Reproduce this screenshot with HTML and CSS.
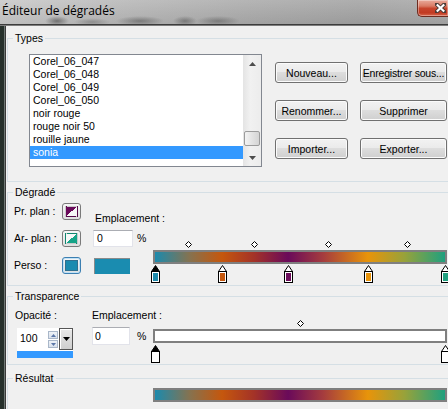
FILE: index.html
```html
<!DOCTYPE html>
<html lang="fr">
<head>
<meta charset="utf-8">
<title>Éditeur de dégradés</title>
<link rel="stylesheet" href="styles.css">
</head>
<body>
<div class="window">
  <header class="titlebar">
    <span class="title">Éditeur de dégradés</span>
    <div class="close" aria-label="Fermer">
      <svg width="11" height="10" viewBox="0 0 11 10"><path d="M1.5 1.2 L9.5 8.8 M9.5 1.2 L1.5 8.8" stroke="#4a3a36" stroke-width="4" stroke-linecap="square"/><path d="M1.8 1.5 L9.2 8.5 M9.2 1.5 L1.8 8.5" stroke="#fff" stroke-width="2.2"/></svg>
    </div>
  </header>
  <div class="frame-line"></div>
  <div class="frame">
    <div class="frame-edge"></div>
    <main class="client">

      <fieldset class="group types">
        <legend>Types</legend>
        <div class="types-body">
          <div class="listbox">
            <ul class="items">
              <li>Corel_06_047</li>
              <li>Corel_06_048</li>
              <li>Corel_06_049</li>
              <li>Corel_06_050</li>
              <li>noir rouge</li>
              <li>rouge noir 50</li>
              <li>rouille jaune</li>
              <li class="selected">sonia</li>
            </ul>
            <div class="scrollbar">
              <div class="sb-btn"><svg width="7" height="4" viewBox="0 0 7 4"><path d="M3.5 0 L7 4 L0 4 Z" fill="#4d4d4d"/></svg></div>
              <div class="sb-track"><div class="sb-thumb"></div></div>
              <div class="sb-btn"><svg width="7" height="4" viewBox="0 0 7 4"><path d="M0 0 L7 0 L3.5 4 Z" fill="#4d4d4d"/></svg></div>
            </div>
          </div>
          <div class="buttons">
            <button class="btn">Nouveau...</button>
            <button class="btn wide">Enregistrer sous...</button>
            <button class="btn">Renommer...</button>
            <button class="btn">Supprimer</button>
            <button class="btn">Importer...</button>
            <button class="btn">Exporter...</button>
          </div>
        </div>
      </fieldset>

      <fieldset class="group degrade">
        <legend>Dégradé</legend>
        <div class="grad-body">
          <div class="swatch-grid">
            <span class="lbl">Pr. plan :</span>
            <div class="swatch-btn"><span class="chip chip-fg"></span></div>
            <span class="lbl">Ar- plan :</span>
            <div class="swatch-btn"><span class="chip chip-bg"></span></div>
            <span class="lbl">Perso :</span>
            <div class="swatch-btn active"><span class="chip chip-custom"></span></div>
          </div>
          <div class="place-col">
            <span class="lbl place-lbl">Emplacement :</span>
            <div class="field-row"><span class="field">0</span><span class="pct">%</span></div>
            <div class="custom-color"></div>
          </div>
          <div class="bar-col">
            <div class="ticks">
              <svg class="diamond" style="left:11.5%" width="7" height="7" viewBox="0 0 7 7"><path d="M3.5 0.5 L6.5 3.5 L3.5 6.5 L0.5 3.5 Z" fill="#fff" stroke="#000"/></svg>
              <svg class="diamond" style="left:34.3%" width="7" height="7" viewBox="0 0 7 7"><path d="M3.5 0.5 L6.5 3.5 L3.5 6.5 L0.5 3.5 Z" fill="#fff" stroke="#000"/></svg>
              <svg class="diamond" style="left:59.5%" width="7" height="7" viewBox="0 0 7 7"><path d="M3.5 0.5 L6.5 3.5 L3.5 6.5 L0.5 3.5 Z" fill="#fff" stroke="#000"/></svg>
              <svg class="diamond" style="left:86.8%" width="7" height="7" viewBox="0 0 7 7"><path d="M3.5 0.5 L6.5 3.5 L3.5 6.5 L0.5 3.5 Z" fill="#fff" stroke="#000"/></svg>
            </div>
            <div class="bar gradient"></div>
            <div class="stops">
              <svg class="marker" style="left:0%" width="9" height="18" viewBox="0 0 9 18"><path d="M4.5 0.5 L8.5 6.5 L0.5 6.5 Z" fill="#000" stroke="#000"/><rect x="0.5" y="6.5" width="8" height="11" fill="#fff" stroke="#000"/><rect x="2" y="8" width="5" height="8" fill="#1d89ab"/></svg>
              <svg class="marker" style="left:23.1%" width="9" height="18" viewBox="0 0 9 18"><path d="M4.5 0.5 L8.5 6.5 L0.5 6.5 Z" fill="#fff" stroke="#000"/><rect x="0.5" y="6.5" width="8" height="11" fill="#fff" stroke="#000"/><rect x="2" y="8" width="5" height="8" fill="#c6570d"/></svg>
              <svg class="marker" style="left:45.9%" width="9" height="18" viewBox="0 0 9 18"><path d="M4.5 0.5 L8.5 6.5 L0.5 6.5 Z" fill="#fff" stroke="#000"/><rect x="0.5" y="6.5" width="8" height="11" fill="#fff" stroke="#000"/><rect x="2" y="8" width="5" height="8" fill="#6c0d5c"/></svg>
              <svg class="marker" style="left:73.4%" width="9" height="18" viewBox="0 0 9 18"><path d="M4.5 0.5 L8.5 6.5 L0.5 6.5 Z" fill="#fff" stroke="#000"/><rect x="0.5" y="6.5" width="8" height="11" fill="#fff" stroke="#000"/><rect x="2" y="8" width="5" height="8" fill="#e8940b"/></svg>
              <svg class="marker" style="left:100%" width="9" height="18" viewBox="0 0 9 18"><path d="M4.5 0.5 L8.5 6.5 L0.5 6.5 Z" fill="#fff" stroke="#000"/><rect x="0.5" y="6.5" width="8" height="11" fill="#fff" stroke="#000"/><rect x="2" y="8" width="5" height="8" fill="#1fa07f"/></svg>
            </div>
          </div>
        </div>
      </fieldset>

      <fieldset class="group transp">
        <legend>Transparence</legend>
        <div class="trans-body">
          <div class="op-col">
            <span class="lbl">Opacité :</span>
            <div class="combo">
              <div class="combo-top">
                <div class="combo-edit">
                  <span class="combo-val">100</span>
                  <div class="spin">
                    <span class="spin-btn"><svg width="5" height="3" viewBox="0 0 5 3"><path d="M2.5 0 L5 3 L0 3 Z" fill="#5b77a8"/></svg></span>
                    <span class="spin-btn"><svg width="5" height="3" viewBox="0 0 5 3"><path d="M0 0 L5 0 L2.5 3 Z" fill="#5b77a8"/></svg></span>
                  </div>
                </div>
                <div class="combo-drop"><svg width="7" height="4" viewBox="0 0 7 4"><path d="M0 0 L7 0 L3.5 4 Z" fill="#000"/></svg></div>
              </div>
              <div class="combo-sel"></div>
            </div>
          </div>
          <div class="place-col t">
            <span class="lbl">Emplacement :</span>
            <div class="field-row"><span class="field t">0</span><span class="pct">%</span></div>
          </div>
          <div class="bar-col t">
            <div class="ticks">
              <svg class="diamond" style="left:50%" width="7" height="7" viewBox="0 0 7 7"><path d="M3.5 0.5 L6.5 3.5 L3.5 6.5 L0.5 3.5 Z" fill="#fff" stroke="#000"/></svg>
            </div>
            <div class="bar white"></div>
            <div class="stops t">
              <svg class="marker" style="left:0%" width="9" height="18" viewBox="0 0 9 18"><path d="M4.5 0.5 L8.5 6.5 L0.5 6.5 Z" fill="#000" stroke="#000"/><rect x="0.5" y="6.5" width="8" height="11" fill="#fff" stroke="#000"/></svg>
              <svg class="marker" style="left:100%" width="9" height="18" viewBox="0 0 9 18"><path d="M4.5 0.5 L8.5 6.5 L0.5 6.5 Z" fill="#fff" stroke="#000"/><rect x="0.5" y="6.5" width="8" height="11" fill="#fff" stroke="#000"/></svg>
            </div>
          </div>
        </div>
      </fieldset>

      <fieldset class="group result">
        <legend>Résultat</legend>
        <div class="result-body">
          <div class="bar gradient"></div>
        </div>
      </fieldset>

    </main>
  </div>
</div>
</body>
</html>
```

FILE: styles.css
```css
* { box-sizing: border-box; }
html, body { margin: 0; padding: 0; }
body {
  width: 448px;
  height: 409px;
  overflow: hidden;
  background: #f0f0f0;
  font-family: "Liberation Sans", Arial, sans-serif;
  font-size: 10.5px;
  color: #000;
}
.window {
  width: 448px;
  height: 409px;
  display: flex;
  flex-direction: column;
  overflow: hidden;
}

/* title bar */
.titlebar {
  height: 24px;
  flex: none;
  display: flex;
  align-items: flex-start;
  background:
    radial-gradient(ellipse 12px 5px at 57px 21px, rgba(55,55,55,.55), transparent),
    radial-gradient(ellipse 18px 4px at 92px 22px, rgba(70,70,70,.35), transparent),
    radial-gradient(ellipse 24px 5px at 140px 21px, rgba(60,60,60,.45), transparent),
    radial-gradient(ellipse 12px 5px at 185px 21px, rgba(60,60,60,.45), transparent),
    radial-gradient(ellipse 22px 5px at 218px 21px, rgba(60,60,60,.40), transparent),
    linear-gradient(to bottom, rgba(255,255,255,.12), rgba(0,0,0,.05)),
    linear-gradient(to right, #c9c9c9 0%, #b7b7b7 28%, #ababab 55%, #a3a3a3 80%, #a9a9a9 100%);
}
.title {
  font-family: "Open Sans", "Liberation Sans", sans-serif;
  font-size: 12px;
  line-height: 17px;
  margin: 2px 0 0 2px;
  color: #000;
}
.close {
  margin-left: auto;
  width: 31px;
  height: 17px;
  display: flex;
  align-items: center;
  justify-content: flex-end;
  padding-right: 2px;
  border: 1px solid #6e2c20;
  border-top: 0;
  border-right: 0;
  border-radius: 0 0 0 5px;
  background: linear-gradient(#e9aa9b 0%, #d97a64 38%, #c7442c 52%, #c13a22 80%, #d8674c 100%);
  box-shadow: inset 0 0 0 1px rgba(255,255,255,.35);
}
.frame-line {
  height: 2px;
  flex: none;
  background: linear-gradient(#3c3c3c 50%, #7d7d7d 50%);
}
.frame {
  flex: 1;
  display: flex;
  min-height: 0;
}
.frame-edge {
  width: 6px;
  flex: none;
  background: linear-gradient(to right, #26302b 0 4px, #6f7774 4px 5px, #3a3a3a 5px 6px);
}
.client {
  flex: 1;
  background: #f0f0f0;
  padding-left: 1px;
  overflow: hidden;
}

/* group boxes */
.group {
  margin: 0;
  padding: 0;
  border: 1px solid #d5dfe5;
  width: 460px;
  min-width: 0;
}
.group legend {
  margin-left: 5px;
  padding: 0 2px;
  font-size: 10.5px;
  line-height: 13px;
}
.types { margin-top: 6px; }
.degrade { margin-top: 4px; }
.transp { margin-top: 4px; }
.result { margin-top: 7px; }

.lbl { line-height: 13px; white-space: nowrap; }

/* types */
.types-body {
  display: flex;
  align-items: flex-start;
  padding: 9px 0 14px 21px;
}
.listbox {
  width: 233px;
  height: 113px;
  border: 1px solid #828790;
  background: #fff;
  display: flex;
}
.items {
  list-style: none;
  margin: 0;
  padding: 0;
  width: 213px;
}
.items li {
  height: 13px;
  line-height: 13px;
  padding-left: 3px;
  white-space: nowrap;
}
.items li.selected {
  background: #3399ff;
  color: #fff;
}
.scrollbar {
  width: 18px;
  display: flex;
  flex-direction: column;
  background: linear-gradient(to right, #e4e4e4, #f1f1f1 40%, #ececec);
}
.sb-btn {
  height: 17px;
  flex: none;
  display: flex;
  align-items: center;
  justify-content: center;
}
.sb-track {
  flex: 1;
  display: flex;
  flex-direction: column;
  padding: 59px 1px 0 1px;
}
.sb-thumb {
  height: 15px;
  border: 1px solid #9b9b9b;
  border-radius: 2px;
  background: linear-gradient(to right, #f3f3f3, #e3e3e3 50%, #d4d4d4);
}
.buttons {
  display: grid;
  grid-template-columns: 73px 87px;
  grid-auto-rows: 21px;
  column-gap: 12px;
  row-gap: 17px;
  margin: 8px 0 0 13px;
}
.btn {
  font: inherit;
  color: #000;
  padding: 0;
  border: 1px solid #707070;
  border-radius: 3px;
  background: linear-gradient(#f2f2f2 0%, #ebebeb 45%, #dddddd 50%, #cfcfcf 100%);
  box-shadow: inset 0 0 0 1px #fbfbfb;
  white-space: nowrap;
  overflow: hidden;
}
.btn.wide { letter-spacing: -0.2px; }

/* dégradé */
.grad-body {
  display: flex;
  align-items: flex-start;
  padding: 0 0 2px 6px;
}
.swatch-grid {
  display: grid;
  grid-template-columns: 48px 19px;
  grid-auto-rows: 17px;
  row-gap: 10px;
  align-items: center;
  margin-top: 4px;
}
.swatch-btn {
  width: 19px;
  height: 17px;
  border: 1px solid #7a7a7a;
  border-radius: 3px;
  padding: 2px;
  background: linear-gradient(#f6f6f6, #e0e0e0);
  display: flex;
}
.swatch-btn.active {
  border-color: #3c7fb1;
  box-shadow: inset 0 0 0 1px #bfe1f7;
}
.chip {
  flex: 1;
  border: 1px solid rgba(0,0,0,.18);
}
.chip-fg { background: linear-gradient(to bottom right, #6a0a5a 50%, #f7f7f7 50%); }
.chip-bg { background: linear-gradient(to bottom right, #f7f7f7 50%, #15a488 50%); }
.chip-custom { background: #1a8bb0; border-color: #2f6f8f; }

.place-col {
  width: 60px;
  margin-left: 12px;
  display: flex;
  flex-direction: column;
  align-items: flex-start;
}
.place-lbl { margin: 13px 0 0 2px; }
.field-row {
  display: flex;
  align-items: center;
  margin-top: 5px;
}
.field {
  width: 40px;
  height: 17px;
  background: #fff;
  border: 1px solid #e2e3ea;
  border-top-color: #abadb3;
  padding-left: 3px;
  line-height: 15px;
}
.pct { margin-left: 4px; line-height: 13px; }
.custom-color {
  width: 36px;
  height: 16px;
  margin: 11px 0 0 1px;
  background: #1a8cb0;
  border-top: 1px solid #8a8a8a;
  border-left: 1px solid #8a8a8a;
}

.bar-col {
  width: 294px;
  margin-top: 42px;
  display: flex;
  flex-direction: column;
}
.ticks {
  position: relative;
  height: 7px;
  margin: 0 2px 2px;
}
.diamond {
  position: absolute;
  top: 0;
  margin-left: -3px;
  display: block;
}
.bar {
  height: 14px;
  border: 2px solid #7f7f7f;
}
.bar.gradient {
  background: linear-gradient(to right, #1c8aad 0%, #86724f 12%, #c5570d 23.1%, #a43327 34%, #6a0a5a 45.9%, #a53c3e 58%, #e8940a 73.4%, #98a23a 86%, #1fa07f 100%);
}
.bar.white { background: #fff; }
.stops {
  position: relative;
  height: 18px;
  margin: 1px 2px 0;
}
.stops.t { margin-top: 2px; }
.marker {
  position: absolute;
  top: 0;
  margin-left: -4px;
  display: block;
}

/* transparence */
.trans-body {
  display: flex;
  align-items: flex-start;
  padding: 0 0 1px 7px;
}
.op-col {
  width: 77px;
  display: flex;
  flex-direction: column;
  align-items: flex-start;
  padding-top: 6px;
}
.combo {
  width: 56px;
  margin: 6px 0 0 2px;
  background: #fff;
}
.combo-top {
  display: flex;
  height: 22px;
}
.combo-edit {
  flex: 1;
  display: flex;
  align-items: flex-start;
  padding-left: 3px;
}
.combo-val {
  line-height: 15px;
  margin-top: 3px;
  width: 28px;
}
.spin {
  display: flex;
  flex-direction: column;
  gap: 1px;
  margin-top: 3px;
}
.spin-btn {
  width: 10px;
  height: 8px;
  border: 1px solid #a9b7c9;
  background: linear-gradient(#eef2f7, #d9e1ec);
  display: flex;
  align-items: center;
  justify-content: center;
}
.combo-drop {
  width: 14px;
  border: 1px solid #555;
  background: linear-gradient(#e8e8e8, #cfcfcf);
  box-shadow: inset 1px 1px 0 #fff;
  display: flex;
  align-items: center;
  justify-content: center;
}
.combo-sel {
  height: 7px;
  margin-top: 1px;
  background: #3399ff;
}
.place-col.t {
  width: 61px;
  margin-left: 0;
  padding-top: 6px;
}
.place-col.t .field-row { margin-top: 5px; }
.field.t {
  width: 38px;
  height: 18px;
  padding-left: 2px;
  line-height: 16px;
}
.place-col.t .pct { margin-left: 7px; }
.bar-col.t { margin-top: 17px; }

/* résultat */
.result-body {
  padding: 3px 0 20px 145px;
}
.result-body .bar { width: 294px; }
```
